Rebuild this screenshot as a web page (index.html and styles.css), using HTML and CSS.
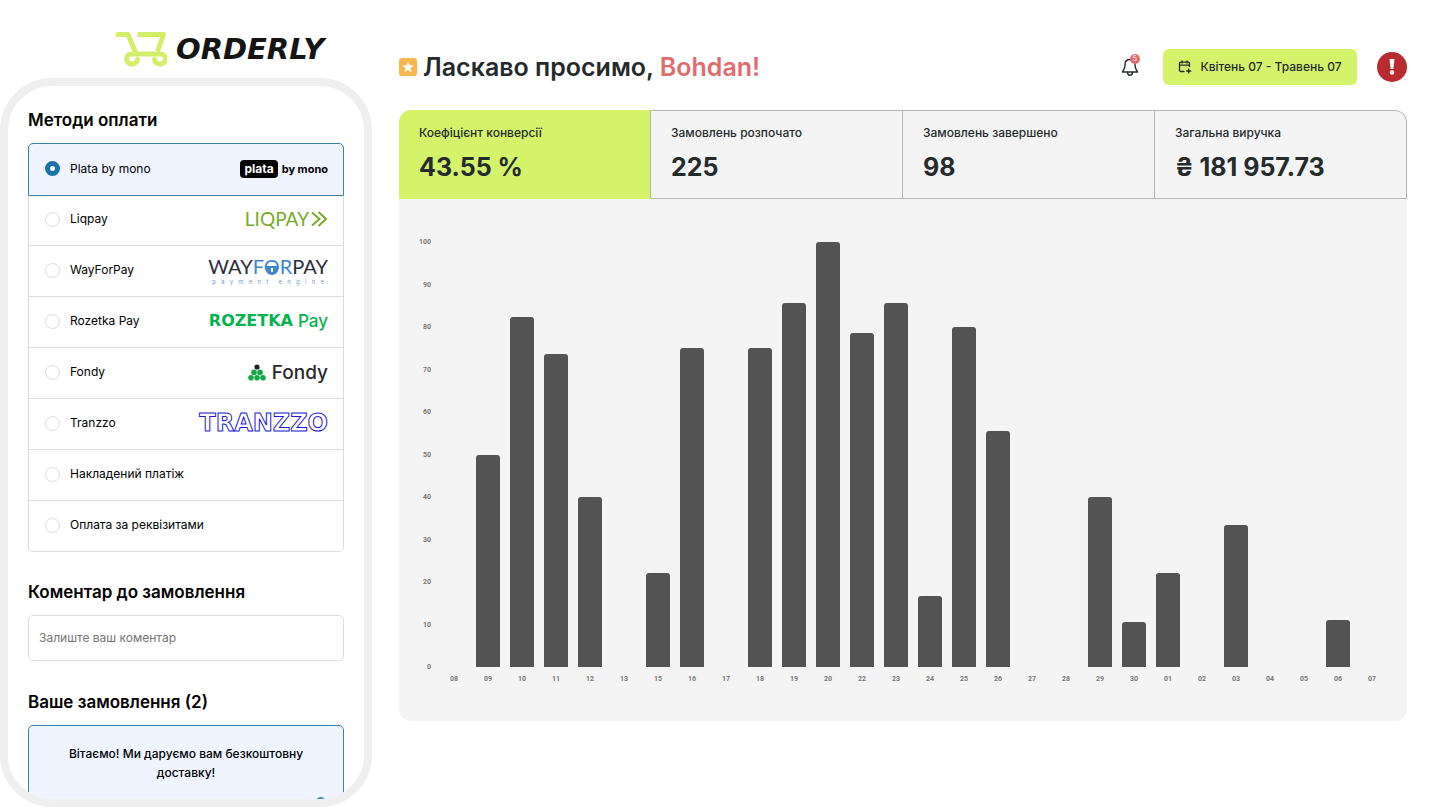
FILE: index.html
```html
<!DOCTYPE html>
<html lang="uk">
<head>
<meta charset="utf-8">
<meta name="viewport" content="width=device-width, initial-scale=1">
<title>Orderly</title>
<link rel="stylesheet" href="styles.css">
</head>
<body>
<div class="page">
  <aside class="side">
    <a class="brand" href="#">
      <svg class="brand-cart" viewBox="0 0 52 36" width="52" height="36" fill="none" stroke="#d3ee69" stroke-width="5" stroke-linejoin="round">
        <path d="M3 3.500h10l7 16.500" stroke-linecap="round"/>
        <path d="M22.500 3.500h26l-6 17"/>
        <path d="M22.500 28.500a5.500 5 0 1 1-5.500-5.500h28a5.500 5 0 1 1-5.500 5.500" stroke-linecap="round"/>
      </svg>
      <span class="brand-name">ORDERLY</span>
    </a>
    <div class="phone">
      <h2 class="title">Методи оплати</h2>
      <ul class="methods">
        <li><label class="method method-active"><input class="radio" type="radio" name="pay" checked><span class="method-name">Plata by mono</span><span class="logo plata"><span class="plata-tag">plata</span>by mono</span></label></li>
        <li><label class="method"><input class="radio" type="radio" name="pay"><span class="method-name">Liqpay</span><span class="logo liqpay">LIQPAY<svg viewBox="0 0 18 16" width="18" height="16" fill="none" stroke="#7aa92a" stroke-width="2"><path d="M2 1.500l7.500 6.500L2 14.500M8.500 1l7.500 7-7.500 7"/></svg></span></label></li>
        <li><label class="method"><input class="radio" type="radio" name="pay"><span class="method-name">WayForPay</span><span class="logo wfp"><span class="wfp-name">WAY<span class="wfp-blue">F<span class="wfp-lock">O<svg viewBox="0 0 12 9" width="12" height="9"><path d="M0 0h12v3a6 6 0 0 1-12 0z" fill="#3f86d0"/><path d="M6 2v4" stroke="#fff" stroke-width="2"/></svg></span>R</span>PAY</span><span class="wfp-sub"><span>p</span><span>a</span><span>y</span><span>m</span><span>e</span><span>n</span><span>t</span><span></span><span>e</span><span>n</span><span>g</span><span>i</span><span>n</span><span>e</span></span></span></label></li>
        <li><label class="method"><input class="radio" type="radio" name="pay"><span class="method-name">Rozetka Pay</span><span class="logo rozetka"><b>ROZETKA</b> Pay</span></label></li>
        <li><label class="method"><input class="radio" type="radio" name="pay"><span class="method-name">Fondy</span><span class="logo fondy"><svg viewBox="0 0 18 17" width="18" height="17" fill="#17a846"><circle cx="9" cy="3" r="2.600" fill="#222"/><circle cx="6" cy="8.400" r="2.800"/><circle cx="12" cy="8.400" r="2.800"/><circle cx="3" cy="13.800" r="2.800"/><circle cx="9" cy="13.800" r="2.800"/><circle cx="15" cy="13.800" r="2.800"/></svg>Fondy</span></label></li>
        <li><label class="method"><input class="radio" type="radio" name="pay"><span class="method-name">Tranzzo</span><span class="logo tranzzo">TRANZZO</span></label></li>
        <li><label class="method"><input class="radio" type="radio" name="pay"><span class="method-name">Накладений платіж</span></label></li>
        <li><label class="method"><input class="radio" type="radio" name="pay"><span class="method-name">Оплата за реквізитами</span></label></li>
      </ul>
      <h2 class="title"><label for="comment">Коментар до замовлення</label></h2>
      <input class="comment" id="comment" type="text" placeholder="Залиште ваш коментар">
      <h2 class="title">Ваше замовлення (2)</h2>
      <div class="notice">
        <p class="notice-text">Вітаємо! Ми даруємо вам безкоштовну доставку!</p>
        <span class="notice-dot"></span>
      </div>
    </div>
  </aside>
  <main class="main">
    <header class="top">
      <svg class="star" viewBox="0 0 18 18" width="18" height="18"><rect width="18" height="18" rx="3" fill="#fdb64c"/><path d="M9 3.500l1.600 3.700 4 .4-3 2.700.9 3.900L9 12.100l-3.500 2.100.9-3.900-3-2.700 4-.4z" fill="#fff"/></svg>
      <h1 class="hello">Ласкаво просимо, <span class="hello-name">Bohdan!</span></h1>
      <button class="bell" type="button" aria-label="Сповіщення">
        <svg viewBox="0 0 18 20" width="18" height="20" fill="none" stroke="#252a2c" stroke-width="1.400" stroke-linejoin="round" stroke-linecap="round"><path d="M9 2.500c-3.200 0-5 2.200-5 5.200 0 4-1.200 5-2.600 7.300h15.200C15.200 12.700 14 11.700 14 7.700c0-3-1.800-5.200-5-5.200z"/><path d="M6.600 15.500a2.400 2.700 0 0 0 4.800 0"/></svg>
        <span class="bell-count">5</span>
      </button>
      <button class="period" type="button">
        <svg viewBox="0 0 14 14" width="14" height="14" fill="none" stroke="#252a2c" stroke-width="1.300"><path d="M6.500 11.500H2.700A1.200 1.200 0 0 1 1.500 10.300V3.400A1.200 1.200 0 0 1 2.700 2.200h7.600a1.200 1.200 0 0 1 1.200 1.200V7M1.500 5.200h10M4 .5v3M9 .5v3M10.700 8.500v5M8.200 11h5"/></svg>
        Квітень 07 - Травень 07
      </button>
      <button class="alert" type="button" aria-label="Увага"><svg viewBox="0 0 30 30" width="30" height="30"><circle cx="15" cy="15" r="15" fill="#b92b30"/><path d="M12.500 7.300q2.500-1.200 5 0L16.300 17h-2.600z" fill="#fff"/><circle cx="15" cy="20.500" r="2.200" fill="#fff"/></svg></button>
    </header>
    <section class="panel">
      <dl class="stats">
        <div class="stat stat-active"><dt>Коефіцієнт конверсії</dt><dd>43.55 %</dd></div>
        <div class="stat"><dt>Замовлень розпочато</dt><dd>225</dd></div>
        <div class="stat"><dt>Замовлень завершено</dt><dd>98</dd></div>
        <div class="stat"><dt>Загальна виручка</dt><dd>₴ 181 957.73</dd></div>
      </dl>
      <div class="chart">
        <div class="axis"><span>100</span><span>90</span><span>80</span><span>70</span><span>60</span><span>50</span><span>40</span><span>30</span><span>20</span><span>10</span><span>0</span></div>
        <div class="bars" id="bars"></div>
        <div class="days" id="days"></div>
      </div>
    </section>
  </main>
</div>
<script src="chart.js"></script>
</body>
</html>
```
FILE: styles.css
```css
* { box-sizing: border-box; }
body { margin: 0; background: #fff; color: #252a2c; font-family: Inter, "Noto Sans", sans-serif; }
button { font: inherit; color: inherit; border: 0; padding: 0; background: none; cursor: pointer; }

.page { display: flex; gap: 27px; height: 100vh; }

.side { flex: 0 0 372px; display: flex; flex-direction: column; padding-bottom: 1px; }
.brand { display: flex; align-items: center; gap: 9px; height: 78px; padding: 20px 0 0 115px; flex: none; color: #151515; text-decoration: none; }
.brand-name { font: italic 700 29px/34px "DejaVu Sans", sans-serif; }

.phone { flex: 1; min-height: 0; overflow: hidden; border: 8px solid #efefef; border-radius: 52px; padding: 20px; color: #000; }
.title { margin: 0; font-size: 17px; font-weight: 600; line-height: 28px; }
.methods { list-style: none; margin: 9px 0 26px; padding: 0; border: 1px solid #dedede; border-radius: 5px; }
.methods li + li { border-top: 1px solid #dedede; }
.method { display: flex; align-items: center; gap: 10px; height: 50px; padding: 0 15px 2px 16px; font-size: 12px; }
.method-active { position: relative; height: 53px; margin: -1px -1px -2px; background: #eff4ff; border: 1px solid #3b83ad; border-radius: 5px 5px 0 0; }
.radio { appearance: none; flex: none; width: 15px; height: 15px; margin: 0; border: 1px solid #dcdcdc; border-radius: 50%; background: #fff; }
.radio:checked { border: 5px solid #1a73ab; }
.method-name { flex: 1; padding-bottom: 1px; }

.logo { display: flex; align-items: center; white-space: nowrap; }
.plata { gap: 4px; color: #000; font-weight: 700; font-size: 11px; }
.plata-tag { padding: 0 4px; border-radius: 4px; background: #000; color: #fff; font-size: 12px; line-height: 18px; }
.liqpay { gap: 1px; color: #7aa92a; font: 400 19px/20px Lato, sans-serif; }
.wfp { flex-direction: column; align-items: stretch; }
.wfp-name { color: #2b2c3c; font: 400 20px/24px Lato, sans-serif; }
.wfp-blue { color: #3f86d0; }
.wfp-lock { position: relative; }
.wfp-lock svg { position: absolute; left: 2px; bottom: 3px; }
.wfp-sub { display: flex; justify-content: space-between; padding: 0 4px; color: #6f9fd0; font-size: 6px; line-height: 8px; }
.rozetka { gap: 5px; color: #05b24e; font-size: 17px; font-weight: 500; }
.rozetka b { font: 700 16px/20px "DejaVu Sans", sans-serif; }
.fondy { gap: 6px; color: #2a2a2a; font-size: 19px; font-weight: 500; }
.tranzzo { color: #fff; font: 700 24px/26px "DejaVu Sans", sans-serif; -webkit-text-stroke: 1px #2119d6; }

.comment { display: block; width: 100%; height: 46px; margin: 9px 0 27px; padding: 0 10px 2px; border: 1px solid #dedede; border-radius: 5px; font: 400 12px Inter, sans-serif; }
.comment::placeholder { color: #757575; }
.notice { position: relative; height: 120px; margin-top: 9px; padding: 18px 30px; border: 1px solid #3b83ad; border-radius: 5px; background: #eff4ff; }
.notice-text { margin: 0; font-size: 12px; font-weight: 500; line-height: 19px; text-align: center; }
.notice-dot { position: absolute; top: 71px; right: 16px; width: 12px; height: 12px; border-radius: 50%; background: #3b83ba; }

.main { flex: 1; min-width: 0; padding: 48px 40px 0 0; }
.top { display: flex; align-items: center; height: 37px; }
.star { flex: none; margin-right: 6px; }
.hello { flex: 1; margin: 0; font-size: 25px; font-weight: 600; line-height: 36px; }
.hello-name { color: #e06c70; }
.bell { position: relative; display: flex; margin-right: 24px; }
.bell-count { position: absolute; top: -3px; right: -1px; width: 10px; border-radius: 50%; background: #e46a6e; color: #fff; font-size: 7px; line-height: 10px; text-align: center; }
.period { display: flex; align-items: center; justify-content: center; gap: 8px; min-width: 194px; height: 36px; margin-right: 20px; padding: 0 14px; border-radius: 6px; background: #d4f36b; font-size: 12px; font-weight: 500; }
.alert { display: flex; }

.panel { margin-top: 25px; border-radius: 12px; background: #f4f4f4; overflow: hidden; }
.stats { display: grid; grid-template-columns: repeat(4, 1fr); margin: 0; }
.stat { height: 89px; padding: 13px 20px; border: 1px solid #b5b5b5; border-left-width: 0; }
.stat-active { background: #d4f36b; border-color: #d4f36b #b5b5b5 #d4f36b #d4f36b; }
.stat:last-child { border-top-right-radius: 12px; }
.stat dt { font-size: 12px; font-weight: 500; line-height: 18px; }
.stat dd { margin: 7px 0 0; font-size: 25px; font-weight: 700; line-height: 36px; }

.chart { display: grid; grid-template-columns: 32px 1fr; column-gap: 6px; padding: 43px 18px 38px 0; font: 700 7px/8px Roboto, sans-serif; color: #777; }
.axis { display: flex; flex-direction: column; justify-content: space-between; height: 433px; margin: -4px 0; text-align: right; }
.bars { display: grid; grid-template-columns: repeat(28, 1fr); align-items: end; justify-items: center; height: 425px; }
.bar { width: 73%; border-radius: 3px 3px 0 0; background: #535353; }
.days { grid-column: 2; display: grid; grid-template-columns: repeat(28, 1fr); padding-top: 8px; text-align: center; }
```
FILE: chart.js
```js
const conversion = [
  ["08", 0], ["09", 50], ["10", 82.3], ["11", 73.7], ["12", 40], ["13", 0], ["15", 22.2],
  ["16", 75], ["17", 0], ["18", 75], ["19", 85.7], ["20", 100], ["22", 78.5], ["23", 85.7],
  ["24", 16.6], ["25", 80], ["26", 55.5], ["27", 0], ["28", 0], ["29", 40], ["30", 10.5],
  ["01", 22.2], ["02", 0], ["03", 33.3], ["04", 0], ["05", 0], ["06", 11.1], ["07", 0]
];
const bars = document.getElementById("bars");
const days = document.getElementById("days");
for (const [day, value] of conversion) {
  const bar = document.createElement("div");
  bar.className = "bar";
  bar.style.height = value + "%";
  bars.append(bar);
  const label = document.createElement("span");
  label.textContent = day;
  days.append(label);
}
```
